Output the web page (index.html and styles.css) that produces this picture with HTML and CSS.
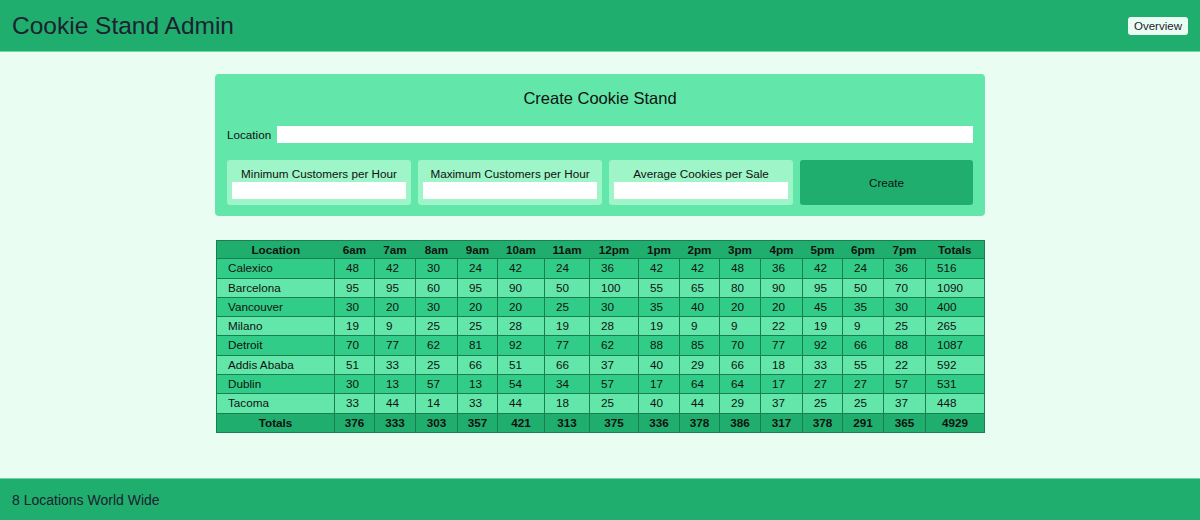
FILE: index.html
```html
<!DOCTYPE html>
<html lang="en">
<head>
<meta charset="utf-8">
<title>Cookie Stand Admin</title>
<link rel="stylesheet" href="styles.css">
</head>
<body>
<div class="page">
  <header class="topbar">
    <h1 class="brand">Cookie Stand Admin</h1>
    <button class="nav-btn" type="button">Overview</button>
  </header>
  <main class="main">
    <form class="stand-form">
      <h2 class="form-title">Create Cookie Stand</h2>
      <div class="loc-row">
        <label class="loc-label" for="loc">Location</label>
        <input class="loc-input" id="loc" type="text">
      </div>
      <div class="field-row">
        <div class="field-box">
          <label class="field-label">Minimum Customers per Hour</label>
          <input class="field-input" type="text">
        </div>
        <div class="field-box">
          <label class="field-label">Maximum Customers per Hour</label>
          <input class="field-input" type="text">
        </div>
        <div class="field-box">
          <label class="field-label">Average Cookies per Sale</label>
          <input class="field-input" type="text">
        </div>
        <button class="create-btn" type="button">Create</button>
      </div>
    </form>
    <div class="table-wrap">
      <table class="sales">
        <colgroup>
          <col style="width:118px"><col style="width:40px"><col style="width:41px"><col style="width:42px"><col style="width:40px"><col style="width:47px"><col style="width:45px"><col style="width:49px"><col style="width:41px"><col style="width:40px"><col style="width:41px"><col style="width:42px"><col style="width:40px"><col style="width:41px"><col style="width:42px"><col style="width:59px">
        </colgroup>
        <thead>
          <tr><th>Location</th><th>6am</th><th>7am</th><th>8am</th><th>9am</th><th>10am</th><th>11am</th><th>12pm</th><th>1pm</th><th>2pm</th><th>3pm</th><th>4pm</th><th>5pm</th><th>6pm</th><th>7pm</th><th>Totals</th></tr>
        </thead>
        <tbody>
          <tr class="odd"><td>Calexico</td><td>48</td><td>42</td><td>30</td><td>24</td><td>42</td><td>24</td><td>36</td><td>42</td><td>42</td><td>48</td><td>36</td><td>42</td><td>24</td><td>36</td><td>516</td></tr>
          <tr class="even"><td>Barcelona</td><td>95</td><td>95</td><td>60</td><td>95</td><td>90</td><td>50</td><td>100</td><td>55</td><td>65</td><td>80</td><td>90</td><td>95</td><td>50</td><td>70</td><td>1090</td></tr>
          <tr class="odd"><td>Vancouver</td><td>30</td><td>20</td><td>30</td><td>20</td><td>20</td><td>25</td><td>30</td><td>35</td><td>40</td><td>20</td><td>20</td><td>45</td><td>35</td><td>30</td><td>400</td></tr>
          <tr class="even"><td>Milano</td><td>19</td><td>9</td><td>25</td><td>25</td><td>28</td><td>19</td><td>28</td><td>19</td><td>9</td><td>9</td><td>22</td><td>19</td><td>9</td><td>25</td><td>265</td></tr>
          <tr class="odd"><td>Detroit</td><td>70</td><td>77</td><td>62</td><td>81</td><td>92</td><td>77</td><td>62</td><td>88</td><td>85</td><td>70</td><td>77</td><td>92</td><td>66</td><td>88</td><td>1087</td></tr>
          <tr class="even"><td>Addis Ababa</td><td>51</td><td>33</td><td>25</td><td>66</td><td>51</td><td>66</td><td>37</td><td>40</td><td>29</td><td>66</td><td>18</td><td>33</td><td>55</td><td>22</td><td>592</td></tr>
          <tr class="odd"><td>Dublin</td><td>30</td><td>13</td><td>57</td><td>13</td><td>54</td><td>34</td><td>57</td><td>17</td><td>64</td><td>64</td><td>17</td><td>27</td><td>27</td><td>57</td><td>531</td></tr>
          <tr class="even"><td>Tacoma</td><td>33</td><td>44</td><td>14</td><td>33</td><td>44</td><td>18</td><td>25</td><td>40</td><td>44</td><td>29</td><td>37</td><td>25</td><td>25</td><td>37</td><td>448</td></tr>
        </tbody>
        <tfoot>
          <tr><th>Totals</th><th>376</th><th>333</th><th>303</th><th>357</th><th>421</th><th>313</th><th>375</th><th>336</th><th>378</th><th>386</th><th>317</th><th>378</th><th>291</th><th>365</th><th>4929</th></tr>
        </tfoot>
      </table>
    </div>
  </main>
  <footer class="bottombar">8 Locations World Wide</footer>
</div>
</body>
</html>
```

FILE: styles.css
```css
* { box-sizing: border-box; }
html, body { margin: 0; padding: 0; }
body {
  font-family: "Liberation Sans", Arial, Helvetica, sans-serif;
  background: #e9fdf3;
  color: #111;
}
.page {
  min-height: 100vh;
  display: flex;
  flex-direction: column;
}
.topbar {
  height: 52px;
  background: #1fae6e;
  border-bottom: 1px solid #6fd9a6;
  display: flex;
  align-items: center;
  justify-content: space-between;
  padding: 0 12px;
}
.brand {
  margin: 0;
  font-size: 24.5px;
  font-weight: 400;
  color: #1c2230;
  line-height: 30px;
}
.nav-btn {
  font-family: inherit;
  font-size: 11.5px;
  color: #1c2230;
  background: #eafdf3;
  border: none;
  border-radius: 3px;
  width: 60px;
  height: 18px;
  padding: 0;
  margin-top: 1px;
}
.main {
  flex: 1;
  padding-top: 22px;
  display: flex;
  flex-direction: column;
  align-items: center;
}
.stand-form {
  width: 770px;
  background: #62e6aa;
  border-radius: 4px;
  padding: 12px 12px 11px;
}
.form-title {
  margin: 0;
  text-align: center;
  font-size: 16.5px;
  font-weight: 400;
  line-height: 24px;
}
.loc-row {
  margin-top: 16px;
  display: flex;
  align-items: center;
  gap: 6px;
  height: 17px;
}
.loc-label {
  font-size: 11.7px;
}
.loc-input {
  flex: 1;
  height: 17px;
  border: none;
  background: #fff;
  padding: 0;
}
.field-row {
  margin-top: 17px;
  display: flex;
  gap: 7px;
  height: 45px;
}
.field-box {
  width: 184px;
  background: #9df5c8;
  border-radius: 3px;
  padding: 5px 5px 6px;
  display: flex;
  flex-direction: column;
  align-items: stretch;
}
.field-label {
  font-size: 11.7px;
  line-height: 17px;
  text-align: center;
}
.field-input {
  height: 17px;
  border: none;
  background: #fff;
  padding: 0;
}
.create-btn {
  flex: 1;
  font-family: inherit;
  font-size: 11.7px;
  color: #111;
  background: #1fae6e;
  border: none;
  border-radius: 3px;
  padding: 0;
}
.table-wrap {
  margin-top: 24px;
  width: 770px;
  padding-left: 1px;
}
.sales {
  width: 768px;
  table-layout: fixed;
  border-collapse: collapse;
  font-size: 11.7px;
  border: 1px solid #1a7f50;
}
.sales th, .sales td {
  padding: 0;
  white-space: nowrap;
}
.sales thead th {
  background: #1fae6e;
  font-weight: 700;
  text-align: center;
  line-height: 17.3px;
  border-bottom: 1px solid #1a7f50;
}
.sales td {
  text-align: left;
  padding-left: 11px;
  line-height: 18.3px;
  border: 1px solid #1a7f50;
}
.sales tr.odd td { background: #31cc87; }
.sales tr.even td { background: #62e6aa; }
.sales tfoot th {
  background: #1fae6e;
  font-weight: 700;
  text-align: center;
  line-height: 18.3px;
  border: 1px solid #1a7f50;
}
.bottombar {
  height: 42px;
  background: #1fae6e;
  border-top: 1px solid #6fd9a6;
  display: flex;
  align-items: center;
  padding: 0 12px;
  font-size: 14px;
  color: #1c2230;
}
```
